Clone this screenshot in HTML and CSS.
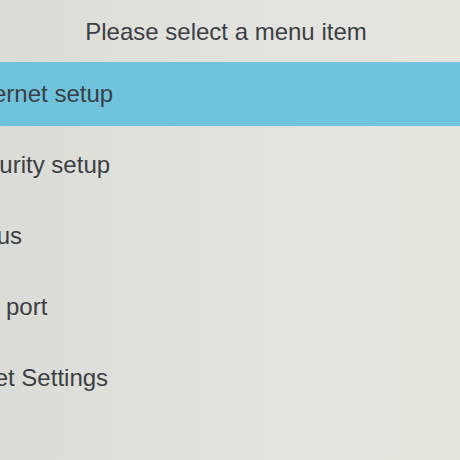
FILE: index.html
```html
<!DOCTYPE html>
<html lang="en">
<head>
    <meta charset="UTF-8">
    <meta name="viewport" content="width=device-width, initial-scale=1.0">
    <title>Admin settings</title>
    <link rel="stylesheet" href="styles.css">
</head>
<body>
    <div class="screen">
        <h1 class="menu-title">Please select a menu item</h1>

        <ul class="menu-list">
            <li class="menu-item selected ethernet">Ethernet setup</li>
            <li class="menu-item security">Security setup</li>
            <li class="menu-item status">Status</li>
            <li class="menu-item aux">Aux port</li>
            <li class="menu-item reset">Reset Settings</li>
        </ul>
    </div>
</body>
</html>
```

FILE: styles.css
```css
body {
    margin: 0;
    padding: 0;
    font-family: "Liberation Sans", Arial, sans-serif;
    color: #3b3e46;
    background: linear-gradient(90deg, #dcdcd6 0%, #e3e3de 50%, #e6e4dd 100%);
    width: 460px;
    height: 460px;
    overflow: hidden;
}

.screen {
    width: 460px;
    height: 460px;
    overflow: hidden;
}

.menu-title {
    margin: 0;
    padding: 17px 8px 0 0;
    height: 62px;
    box-sizing: border-box;
    text-align: center;
    font-size: 24px;
    font-weight: 400;
    line-height: 30px;
}

/* the screen photo is cropped on the left, so the list starts off-screen */
.menu-list {
    list-style: none;
    margin: 0 0 0 -41px;
    padding: 0;
}

.menu-item {
    height: 64px;
    line-height: 64px;
    margin-bottom: 7px;
    font-size: 24px;
    white-space: nowrap;
}

.menu-item.selected {
    background: #70c3dd;
}

.menu-item.ethernet { text-indent: -2px; }
.menu-item.security { text-indent: -1px; }
.menu-item.status { text-indent: -5px; }
.menu-item.aux { text-indent: -1px; }
.menu-item.reset { text-indent: -7px; }
```
